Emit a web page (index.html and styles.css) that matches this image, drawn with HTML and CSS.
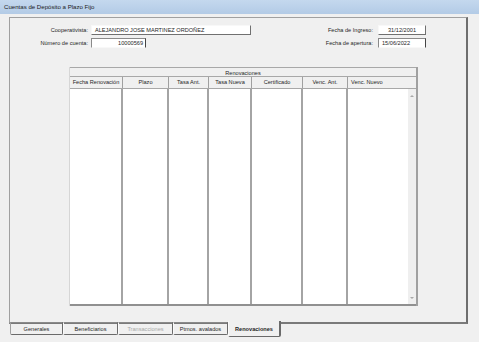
FILE: index.html
```html
<!DOCTYPE html>
<html lang="es">
<head>
    <meta charset="UTF-8">
    <title>Cuentas de Depósito a Plazo Fijo</title>
    <link rel="stylesheet" href="styles.css">
</head>
<body>
    <div class="window">
        <div class="titlebar">Cuentas de Depósito a Plazo Fijo</div>

        <div class="panel">
            <div class="fields">
                <label class="lbl">Cooperativista:</label>
                <div class="box raised wide">ALEJANDRO JOSE MARTINEZ ORDOÑEZ</div>
                <div></div>
                <label class="lbl">Fecha de Ingreso:</label>
                <div class="box raised date centered">31/12/2001</div>

                <label class="lbl">Número de cuenta:</label>
                <div class="box sunken cuenta">10000569</div>
                <div></div>
                <label class="lbl">Fecha de apertura:</label>
                <div class="box sunken date">15/06/2022</div>
            </div>

            <div class="grid">
                <div class="grid-title">Renovaciones</div>
                <div class="grid-head">
                    <div class="hcell c1">Fecha Renovación</div>
                    <div class="hcell c2">Plazo</div>
                    <div class="hcell c3">Tasa Ant.</div>
                    <div class="hcell c4">Tasa Nueva</div>
                    <div class="hcell c5">Certificado</div>
                    <div class="hcell c6">Venc. Ant.</div>
                    <div class="hcell c7 last">Venc. Nuevo</div>
                </div>
                <div class="grid-body">
                    <div class="col c1"></div>
                    <div class="col c2"></div>
                    <div class="col c3"></div>
                    <div class="col c4"></div>
                    <div class="col c5"></div>
                    <div class="col c6"></div>
                    <div class="col c7 nosep"></div>
                    <div class="scroll">
                        <span class="arrow up"></span>
                        <span class="arrow down"></span>
                    </div>
                </div>
            </div>
        </div>

        <div class="tabs">
            <div class="tab">Generales</div>
            <div class="tab">Beneficiarios</div>
            <div class="tab disabled">Transacciones</div>
            <div class="tab">Ptmos. avalados</div>
            <div class="tab active">Renovaciones</div>
        </div>
    </div>
</body>
</html>
```

FILE: styles.css
```css
body {
    margin: 0;
    background: #f0f0f0;
    font-family: "Liberation Sans", Arial, sans-serif;
    font-size: 5.6px;
    color: #262626;
}
.window {
    width: 479px;
    height: 342px;
    overflow: hidden;
}
.titlebar {
    height: 14px;
    line-height: 14px;
    padding-left: 4px;
    font-size: 6.1px;
    color: #1a1a1a;
    background: linear-gradient(#c4d8ee, #b3cbe6);
}
.panel {
    margin: 3px 11px 0 9px;
    height: 307px;
    box-sizing: border-box;
    border-top: 1px solid #a0a0a0;
    border-left: 1px solid #a0a0a0;
    border-right: 2px solid #6e6e6e;
    border-bottom: 2px solid #7a7a7a;
    padding-top: 7px;
}

/* campos de cabecera */
.fields {
    display: grid;
    grid-template-columns: 78px 160px 1fr 82px 48px;
    grid-auto-rows: 10px;
    column-gap: 3px;
    row-gap: 3px;
    padding-right: 40px;
}
.lbl {
    text-align: right;
    line-height: 10px;
    white-space: nowrap;
}
.fields .lbl:nth-of-type(2),
.fields .lbl:nth-of-type(4) {
    padding-right: 2px;
}
.box {
    background: white;
    line-height: 9px;
    padding: 0 3px;
    box-sizing: border-box;
    white-space: nowrap;
    overflow: hidden;
}
.raised {
    border-right: 1px solid #707070;
    border-bottom: 1px solid #707070;
    border-top: 1px solid #f8f8f8;
    border-left: 1px solid #f8f8f8;
}
.sunken {
    border-top: 1px solid #8a8a8a;
    border-left: 1px solid #8a8a8a;
    border-right: 1px solid #444;
    border-bottom: 1px solid #f8f8f8;
}
.cuenta {
    width: 55px;
    text-align: right;
    padding-right: 2px;
}
.centered {
    text-align: center;
}

/* grilla de renovaciones */
.grid {
    width: 349px;
    margin: 19px 0 0 59px;
    box-sizing: border-box;
    border-left: 1px solid #d6d6d6;
    border-right: 2px solid #a0a0a0;
}
.grid-title {
    height: 10px;
    line-height: 10px;
    text-align: center;
    border-top: 1px solid #a8a8a8;
    border-bottom: 1px solid #a8a8a8;
    box-sizing: border-box;
}
.grid-head {
    display: flex;
    height: 11px;
    border-bottom: 1px solid #a8a8a8;
}
.hcell {
    line-height: 11px;
    text-align: center;
    box-sizing: border-box;
    border-right: 1px solid #a0a0a0;
    white-space: nowrap;
}
.hcell.last {
    border-right: none;
    text-align: left;
    padding-left: 3px;
}
.grid-body {
    display: flex;
    height: 215px;
    border-bottom: 2px solid #909090;
}
.col {
    background: white;
    box-sizing: border-box;
    border-right: 2px solid #a4a4a4;
}
.col.nosep {
    border-right: none;
}
.c1 { width: 53px; }
.c2 { width: 46px; }
.c3 { width: 40px; }
.c4 { width: 43px; }
.c5 { width: 51px; }
.c6 { width: 45px; }
.c7 { width: 60px; }
.hcell.c7 { width: 68px; }
.scroll {
    width: 8px;
    background: #efefef;
    display: flex;
    flex-direction: column;
    justify-content: space-between;
    align-items: center;
    padding: 6px 0 5px;
    box-sizing: border-box;
}
.arrow {
    width: 0;
    height: 0;
    border-left: 2px solid transparent;
    border-right: 2px solid transparent;
}
.arrow.up {
    border-bottom: 2px solid #a8a8a8;
}
.arrow.down {
    border-top: 2px solid #a8a8a8;
}

/* pestañas */
.tabs {
    display: flex;
    margin-left: 10px;
    margin-top: -2px;
}
.tab {
    width: 54px;
    height: 13px;
    line-height: 13px;
    text-align: center;
    box-sizing: border-box;
    border-left: 1px solid #fafafa;
    border-right: 1px solid #6a6a6a;
    border-bottom: 1px solid #6a6a6a;
    border-top: 1px solid #8a8a8a;
    border-radius: 0 0 2px 2px;
    white-space: nowrap;
}
.tab:first-child {
    border-left: 1px solid #a0a0a0;
    width: 53px;
}
.tab:nth-child(2),
.tab:nth-child(3),
.tab:nth-child(4) {
    width: 55px;
}
.tab.disabled {
    color: #a8a8a8;
}
.tab.active {
    width: 53px;
    height: 16px;
    margin-top: -1px;
    line-height: 16px;
    font-weight: bold;
    border-top: none;
    background: #f0f0f0;
    border-right: 2px solid #6a6a6a;
}
```
